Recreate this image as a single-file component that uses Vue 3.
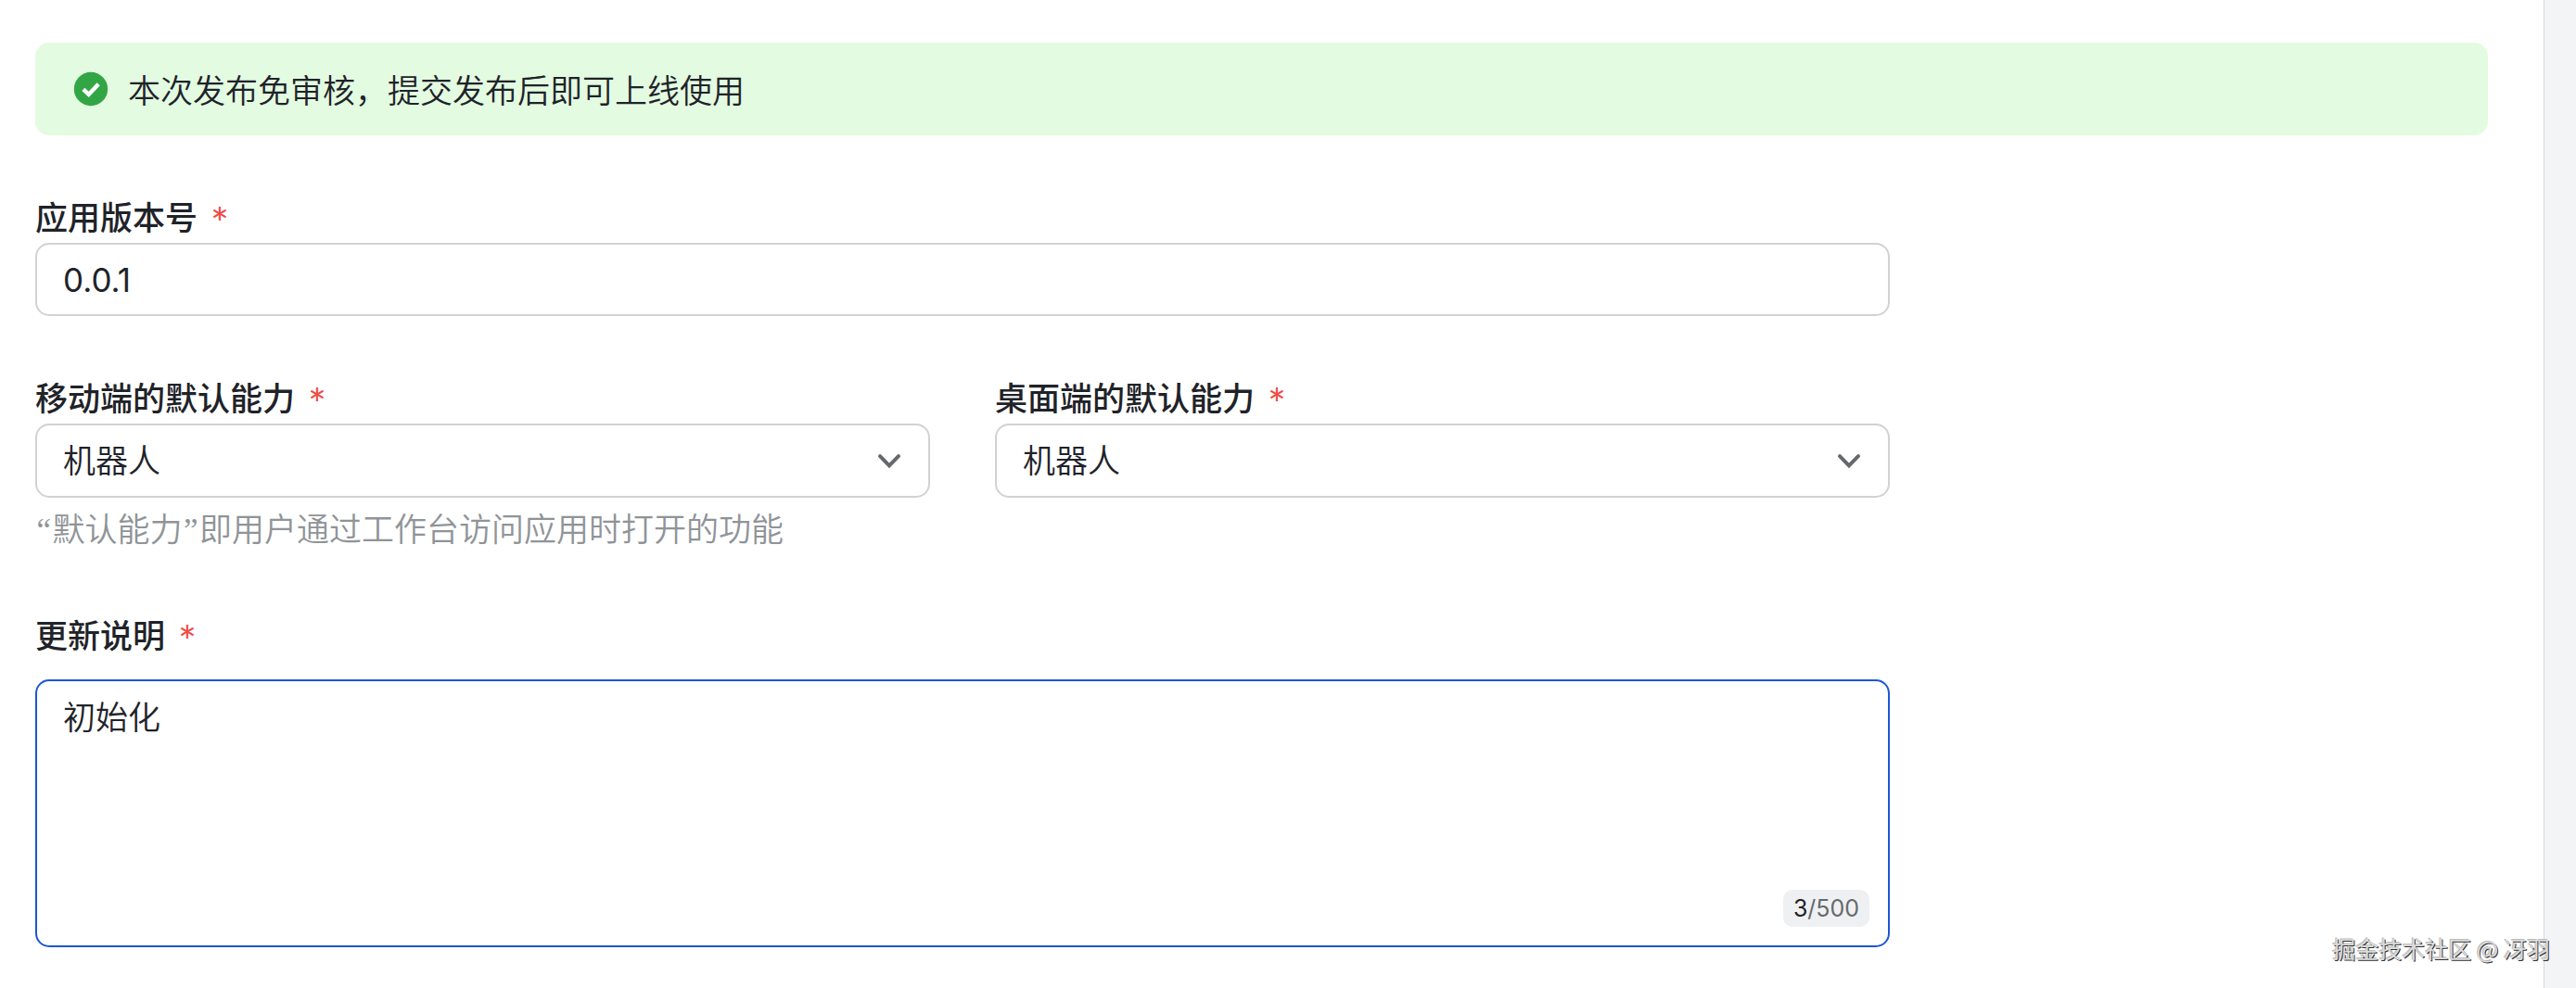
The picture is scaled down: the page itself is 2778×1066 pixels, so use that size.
<template>
  <div class="page">
    <main class="panel">
      <div class="banner">
        <svg class="banner-icon" viewBox="0 0 40 40">
          <circle cx="20" cy="20" r="18.2" fill="#32a645" />
          <path d="M11.9 20.4 L17.7 25.8 L28.2 14.8" fill="none" stroke="#fff" stroke-width="4.4" />
        </svg>
        <span class="banner-text">本次发布免审核，提交发布后即可上线使用</span>
      </div>

      <div class="form">
        <div class="field">
          <div class="label">应用版本号<span class="required">*</span></div>
          <div class="input version">{{ version }}</div>
        </div>

        <div class="field">
          <div class="row">
            <div v-for="item in abilities" :key="item.label" class="col">
              <div class="label">{{ item.label }}<span class="required">*</span></div>
              <div class="input select">
                <span>{{ item.value }}</span>
                <svg class="arrow" viewBox="0 0 30 30">
                  <path d="M5 10.2 L15 20.4 L25 10.2" />
                </svg>
              </div>
            </div>
          </div>
          <div class="hint"><span class="quote">“</span>默认能力<span class="quote">”</span>即用户通过工作台访问应用时打开的功能</div>
        </div>

        <div class="field">
          <div class="label">更新说明<span class="required">*</span></div>
          <div class="textarea">
            {{ note }}
            <div class="counter"><b>{{ note.length }}</b>/500</div>
          </div>
        </div>
      </div>
    </main>
    <aside class="side"></aside>
    <div class="watermark">掘金技术社区 @ 冴羽</div>
  </div>
</template>

<script setup>
import { ref } from "vue";

const version = ref("0.0.1");
const note = ref("初始化");

// Default ability per platform
const abilities = ref([
  { label: "移动端的默认能力", value: "机器人" },
  { label: "桌面端的默认能力", value: "机器人" },
]);
</script>

<style>
body {
  margin: 0;
  background: #fff;
}
</style>

<style scoped>
.page {
  position: relative;
  display: flex;
  width: 100%;
  height: 1066px;
  overflow: hidden;
  color: #1f2329;
  font-family: Inter, "Noto Sans CJK SC", sans-serif;
  font-size: 35px;
  font-weight: 350;
  line-height: 55px;
}

.panel {
  flex: 1;
  box-sizing: border-box;
  padding: 46px 60px 0 38px;
}

.side {
  width: 34px;
  background: #f2f4f6;
  border-left: 1px solid #d5d8da;
}

/* Banner */
.banner {
  display: flex;
  align-items: center;
  gap: 20px;
  height: 100px;
  box-sizing: border-box;
  padding-left: 40px;
  margin-bottom: 61px;
  border-radius: 15px;
  background: #e3fbe1;
}

.banner-icon {
  width: 40px;
  height: 40px;
}

.banner-text {
  padding-top: 4px;
}

/* Form */
.form {
  width: 2000px;
}

.field {
  margin-bottom: 60px;
}

.label {
  height: 55px;
  box-sizing: border-box;
  padding-top: 1px;
  font-weight: 500;
}

.required {
  margin-left: 14px;
  color: #f04a45;
  font-family: Lato, sans-serif;
  font-size: 47px;
  font-weight: 400;
  line-height: 20px;
  vertical-align: -10px;
}

.input {
  display: flex;
  align-items: center;
  height: 80px;
  box-sizing: border-box;
  padding: 0 28px;
  border: 2px solid #d0d2d3;
  border-radius: 15px;
}

.version {
  height: 79px;
  padding-top: 2px;
  margin-bottom: 61px;
  font-weight: 400;
}

.row {
  display: flex;
  gap: 70px;
}

.col {
  flex: 1;
}

.select {
  justify-content: space-between;
}

.arrow {
  width: 30px;
  height: 30px;
  margin-right: -1px;
}

.arrow path {
  fill: none;
  stroke: #65686c;
  stroke-width: 4;
  stroke-linecap: round;
}

.hint {
  height: 55px;
  box-sizing: border-box;
  margin-top: 6px;
  padding-top: 1px;
  color: #8f9498;
}

/* Curly quotes with a fixed narrow advance */
.quote {
  display: inline-block;
  width: 18.5px;
  font-family: "Liberation Serif", serif;
  font-weight: 400;
  line-height: 20px;
  text-align: center;
}

.textarea {
  position: relative;
  height: 289px;
  box-sizing: border-box;
  margin-top: 20px;
  padding: 12px 28px;
  border: 2px solid #1c56d4;
  border-radius: 15px;
}

.counter {
  position: absolute;
  right: 20px;
  bottom: 20px;
  width: 93px;
  height: 40px;
  border-radius: 10px;
  background: #eff0f1;
  color: #646a6f;
  font-size: 25px;
  font-weight: 400;
  line-height: 41px;
  text-align: center;
}

.counter b {
  color: #1f2329;
  font-weight: 400;
}

.watermark {
  position: absolute;
  right: 28px;
  bottom: 24px;
  color: #dcdcdc;
  font-family: "Noto Sans CJK SC", sans-serif;
  font-size: 25px;
  font-weight: 400;
  line-height: 38px;
  text-shadow: 1px 1px 0 #333, -1px -1px 0 #bbb;
}
</style>
